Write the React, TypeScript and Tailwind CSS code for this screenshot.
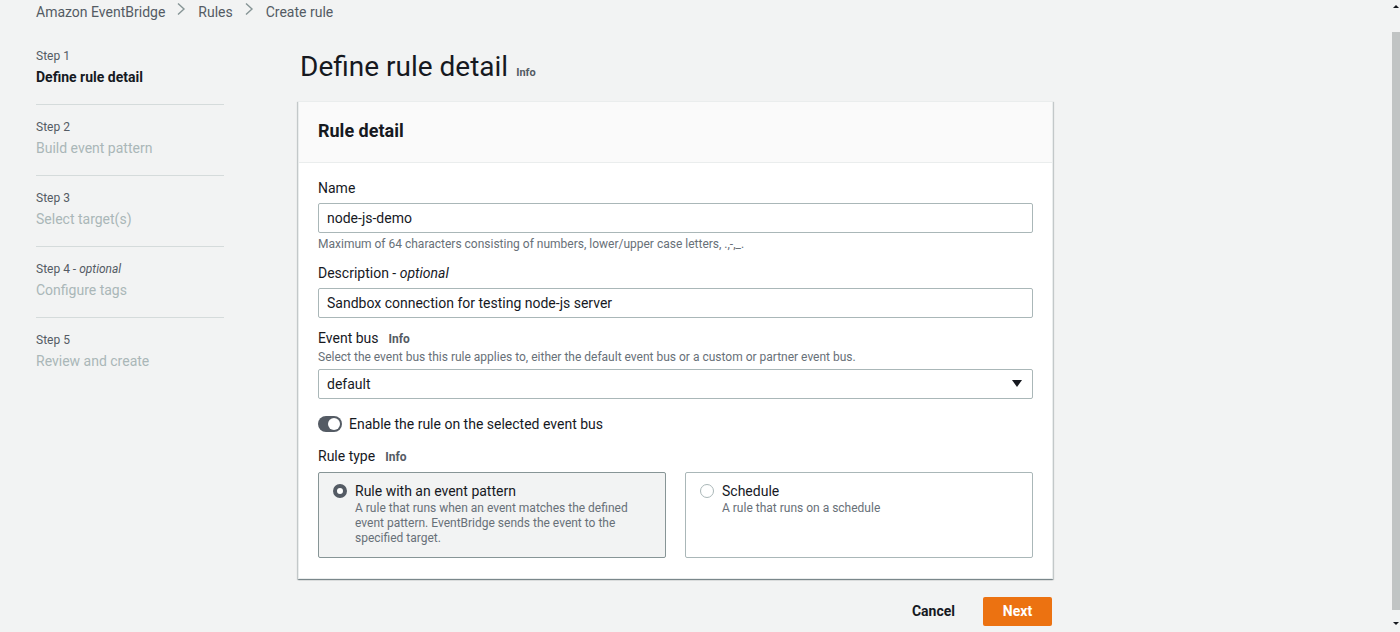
const steps = [
  { label: "Step 1", title: "Define rule detail", active: true },
  { label: "Step 2", title: "Build event pattern" },
  { label: "Step 3", title: "Select target(s)" },
  { label: "Step 4", optional: true, title: "Configure tags" },
  { label: "Step 5", title: "Review and create" },
];

function Chevron() {
  return (
    <svg width="10" height="14" viewBox="0 0 10 14" className="ml-[11px] mr-[12px]">
      <path d="M2 1.5 L8 7 L2 12.5" fill="none" stroke="#879596" strokeWidth="1.4" />
    </svg>
  );
}

function Info({ className = "" }: { className?: string }) {
  return <span className={`font-bold text-[#545b64] ${className}`}>Info</span>;
}

function Field({ value }: { value: string }) {
  return (
    <div className="flex h-[30px] items-center rounded-[2px] border border-[#aab7b8] bg-white px-[8px] text-[14px] text-[#16191f]">
      {value}
    </div>
  );
}

function RuleTile({
  title,
  body,
  selected = false,
}: {
  title: string;
  body: string;
  selected?: boolean;
}) {
  return (
    <div
      className={`flex h-[86px] gap-[8px] rounded-[2px] border pl-[14px] pr-[20px] pt-[8px] ${
        selected ? "border-[#879596] bg-[#f2f3f3]" : "border-[#aab7b8] bg-white"
      }`}
    >
      <div className="flex h-[20px] items-center">
        {selected ? (
          <span className="h-[14px] w-[14px] rounded-full border-[4px] border-[#545b64] bg-white" />
        ) : (
          <span className="h-[14px] w-[14px] rounded-full border border-[#aab7b8] bg-white" />
        )}
      </div>
      <div>
        <div className="text-[14px] leading-[20px] text-[#16191f]">{title}</div>
        <div className="text-[12px] leading-[15px] text-[#687078]">{body}</div>
      </div>
    </div>
  );
}

export default function App() {
  return (
    <div className="flex h-[632px] w-full overflow-hidden bg-[#f2f3f3] font-['Roboto',sans-serif] text-[#16191f]">
      <div className="flex-1">
        {/* Breadcrumb */}
        <nav className="flex h-[48px] items-start pl-[36px] pt-[2px] text-[14px] leading-[20px] text-[#545b64]">
          <span>Amazon EventBridge</span>
          <Chevron />
          <span>Rules</span>
          <Chevron />
          <span>Create rule</span>
        </nav>

        <div className="flex">
          {/* Steps */}
          <aside className="ml-[36px] w-[188px]">
            {steps.map((s, i) => (
              <div
                key={s.label}
                className={`border-b border-[#d5dbdb] pb-[17px] ${i === 0 ? "" : "pt-[14px]"} ${
                  i === steps.length - 1 ? "border-b-0" : ""
                }`}
              >
                <div className="text-[12px] leading-[16px] text-[#545b64]">
                  {s.label}
                  {s.optional && (
                    <>
                      {" - "}
                      <i>optional</i>
                    </>
                  )}
                </div>
                <div
                  className={`mt-[3px] text-[14px] leading-[20px] ${
                    s.active ? "font-bold text-[#16191f]" : "text-[#aab7b8]"
                  }`}
                >
                  {s.title}
                </div>
              </div>
            ))}
          </aside>

          {/* Main */}
          <main className="ml-[74px] w-[755px]">
            <h1 className="flex h-[36px] items-baseline gap-[8px] pl-[2px] pt-[1px] text-[28px] leading-[36px] font-normal">
              Define rule detail
              <Info className="text-[11px] leading-[16px]" />
            </h1>

            <section className="mt-[17px] border border-[#eaeded] bg-white shadow-[0_1px_1px_0_rgba(0,28,36,0.3),1px_1px_1px_0_rgba(0,28,36,0.15),-1px_1px_1px_0_rgba(0,28,36,0.15)]">
              <div className="border-b border-[#eaeded] bg-[#fafafa] px-[19px] pb-[19px] pt-[17px]">
                <h2 className="text-[18px] leading-[24px] font-bold">Rule detail</h2>
              </div>

              <div className="px-[19px] pb-[20px] pt-[15px]">
                <div className="text-[14px] leading-[20px]">Name</div>
                <div className="mt-[5px]">
                  <Field value="node-js-demo" />
                </div>
                <div className="mt-[3px] text-[12px] leading-[16px] text-[#687078]">
                  Maximum of 64 characters consisting of numbers, lower/upper case letters, .,-,_.
                </div>

                <div className="mt-[11px] text-[14px] leading-[20px]">
                  Description - <i>optional</i>
                </div>
                <div className="mt-[5px]">
                  <Field value="Sandbox connection for testing node-js server" />
                </div>

                <div className="mt-[10px] flex items-baseline gap-[10px] text-[14px] leading-[20px]">
                  Event bus
                  <Info className="text-[12px]" />
                </div>
                <div className="text-[12px] leading-[16px] text-[#687078]">
                  Select the event bus this rule applies to, either the default event bus or a custom or partner event bus.
                </div>
                <div className="mt-[4px] flex h-[30px] items-center justify-between rounded-[2px] border border-[#aab7b8] bg-white pl-[8px] pr-[10px] text-[14px]">
                  default
                  <svg width="10" height="8" viewBox="0 0 10 8">
                    <path d="M0 0 H10 L5 7 Z" fill="#16191f" />
                  </svg>
                </div>

                <div className="mt-[15px] flex h-[20px] items-center gap-[7px] text-[14px]">
                  <span className="flex h-[16px] w-[24px] items-center justify-end rounded-full bg-[#545b64] pr-[2px]">
                    <span className="h-[12px] w-[12px] rounded-full bg-white" />
                  </span>
                  Enable the rule on the selected event bus
                </div>

                <div className="mt-[12px] flex items-baseline gap-[10px] text-[14px] leading-[20px]">
                  Rule type
                  <Info className="text-[12px]" />
                </div>
                <div className="mt-[5px] grid grid-cols-2 gap-[19px]">
                  <RuleTile
                    selected
                    title="Rule with an event pattern"
                    body="A rule that runs when an event matches the defined event pattern. EventBridge sends the event to the specified target."
                  />
                  <RuleTile title="Schedule" body="A rule that runs on a schedule" />
                </div>
              </div>
            </section>

            <div className="mt-[18px] flex items-center justify-end gap-[28px] pr-[1px]">
              <button className="text-[14px] font-bold text-[#16191f]">Cancel</button>
              <button className="h-[29px] w-[69px] rounded-[2px] bg-[#ec7211] text-[14px] font-bold text-white">
                Next
              </button>
            </div>
          </main>
        </div>
      </div>

      {/* Scrollbar */}
      <div className="flex w-[8px] flex-col items-center">
        <svg width="8" height="32" viewBox="0 0 8 32">
          <path d="M1 8 L4 5 L7 8 Z" fill="#16191f" />
        </svg>
        <div className="h-[578px] w-full bg-[#c1c4c4]" />
        <svg width="8" height="22" viewBox="0 0 8 22">
          <path d="M1 12 L4 15 L7 12 Z" fill="#16191f" />
        </svg>
      </div>
    </div>
  );
}
